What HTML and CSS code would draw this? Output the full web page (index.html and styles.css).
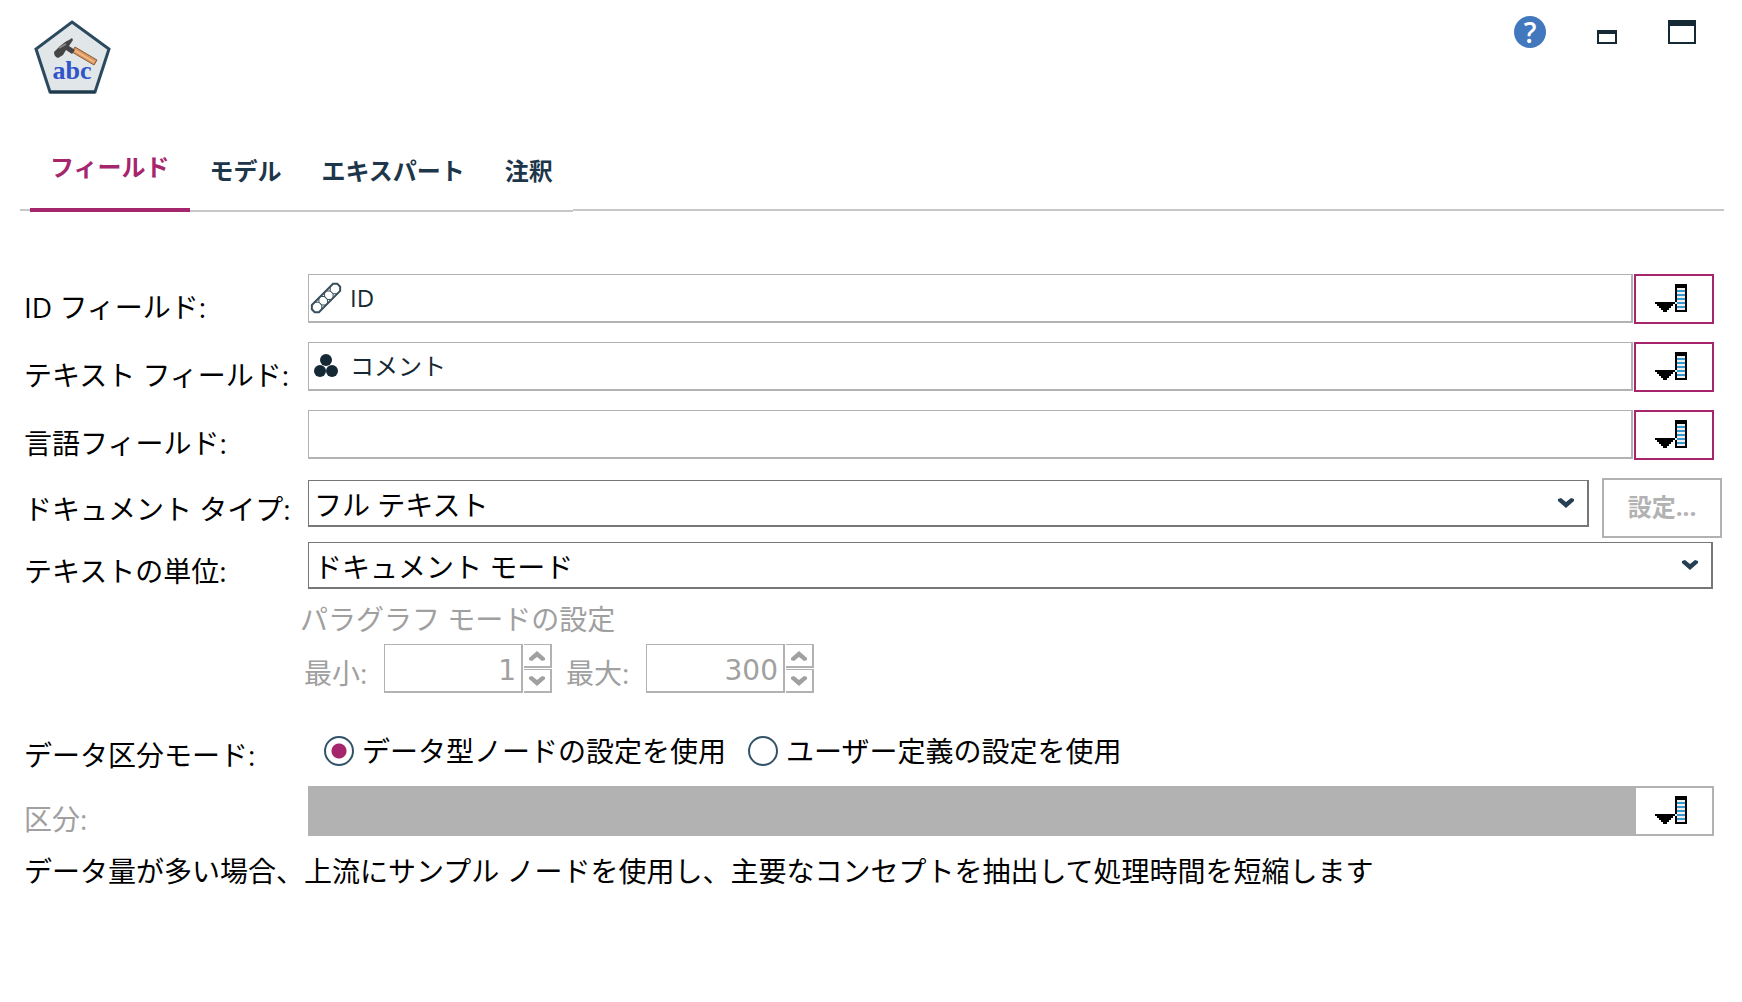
FILE: index.html
```html
<!DOCTYPE html>
<html lang="ja">
<head>
    <meta charset="UTF-8">
    <meta name="viewport" content="width=device-width, initial-scale=1.0">
    <title>フィールド</title>
    <link rel="stylesheet" href="styles.css">
</head>
<body>

<!-- shared icons -->
<svg class="sprite" aria-hidden="true">
    <symbol id="pick" viewBox="0 0 36 30">
        <g shape-rendering="crispEdges">
            <path d="M0 18h20v2h-2v2h-2v2h-2v2h-2v2h-4v-2h-2v-2h-2v-2h-2v-2h-2z"/>
            <path d="M20 0h12v28h-12z"/>
            <path fill="#f0f0f0" d="M22 4h8v22h-8zM20 18h2v2h-2z"/>
            <path fill="#3399cc" d="M22 6h8v2h-8zM22 10h8v2h-8zM22 14h8v2h-8zM22 18h8v2h-8zM22 22h8v2h-8z"/>
        </g>
    </symbol>
    <symbol id="down" viewBox="0 0 16 10">
        <path d="M0 1l3-1 5 4 5-4 3 1v2l-8 7-8-7z"/>
    </symbol>
    <symbol id="up" viewBox="0 0 16 10">
        <path d="M0 9l3 1 5-4 5 4 3-1v-2l-8-7-8 7z"/>
    </symbol>
</svg>

<header class="header">
    <svg class="logo" viewBox="0 0 80 80" role="img" aria-label="abc">
        <path d="M40 4L77 31 63 74H18L4 31z" fill="#e1e6e9" stroke="#2b4a5f" stroke-width="3"/>
        <path d="M18 74H63" stroke="#1f3a4d" stroke-width="3"/>
        <path d="M40 34l3-5 22 13-3 5z" fill="#d9975f" stroke="#8a5a35"/>
        <path d="M42 32l20 12" stroke="#f0b987" stroke-width="2"/>
        <path d="M22 34l6-6c4-3 6-5 9-6l3-2 1 2-4 6 6 4-3 4-6-4-3 5-5 3c-3-1-4-3-4-6z" fill="#454545"/>
        <path d="M27 30l7-4" stroke="#888" stroke-width="2"/>
        <text class="logo-text" x="40" y="61" text-anchor="middle">abc</text>
    </svg>
    <div class="window-buttons">
        <button type="button" class="help" aria-label="ヘルプ">?</button>
        <button type="button" class="window-button" aria-label="最小化">
            <svg width="20" height="14" viewBox="0 0 20 14"><path fill="#152935" fill-rule="evenodd" d="M0 0h20v14H0zM2 4v8h16V4z"/></svg>
        </button>
        <button type="button" class="window-button" aria-label="最大化">
            <svg width="28" height="24" viewBox="0 0 28 24"><path fill="#152935" fill-rule="evenodd" d="M0 0h28v24H0zM2 6v16h24V6z"/></svg>
        </button>
    </div>
</header>

<nav class="tabs" role="tablist">
    <button type="button" class="tab active" role="tab" aria-selected="true">フィールド</button>
    <button type="button" class="tab" role="tab">モデル</button>
    <button type="button" class="tab" role="tab">エキスパート</button>
    <button type="button" class="tab" role="tab">注釈</button>
</nav>

<form class="form">
    <div class="row">
        <label for="idField">ID フィールド:</label>
        <div class="picker">
            <div class="field">
                <svg class="field-icon" viewBox="0 0 32 32" fill="none" stroke="#3a4f5c">
                    <g transform="rotate(-45 16 16)">
                        <path d="M1 11h30l3 3v4l-3 3H1l-3-3v-4z" stroke-width="2"/>
                        <path d="M5 11l3 3v4l-3 3M11 11l-3 3M8 18l3 3M13 11l3 3v4l-3 3M19 11l-3 3M16 18l3 3M21 11l3 3v4l-3 3M27 11l-3 3M24 18l3 3" stroke-width="1"/>
                    </g>
                </svg>
                <input type="text" id="idField" value="ID" readonly>
            </div>
            <button type="button" class="pick" aria-label="フィールドを選択"><svg><use href="#pick"/></svg></button>
        </div>
    </div>

    <div class="row">
        <label for="textField">テキスト フィールド:</label>
        <div class="picker">
            <div class="field">
                <svg class="field-icon" viewBox="0 0 32 32" fill="#152935">
                    <circle cx="16" cy="10" r="6"/>
                    <circle cx="10" cy="21" r="6"/>
                    <circle cx="22" cy="21" r="6"/>
                </svg>
                <input type="text" id="textField" value="コメント" readonly>
            </div>
            <button type="button" class="pick" aria-label="フィールドを選択"><svg><use href="#pick"/></svg></button>
        </div>
    </div>

    <div class="row">
        <label for="languageField">言語フィールド:</label>
        <div class="picker">
            <div class="field">
                <input type="text" id="languageField" readonly>
            </div>
            <button type="button" class="pick" aria-label="フィールドを選択"><svg><use href="#pick"/></svg></button>
        </div>
    </div>

    <div class="row row-type">
        <label for="documentType">ドキュメント タイプ:</label>
        <div class="type">
            <div class="select">
                <select id="documentType">
                    <option>フル テキスト</option>
                </select>
                <svg class="arrow"><use href="#down"/></svg>
            </div>
            <button type="button" class="settings" disabled>設定...</button>
        </div>
    </div>

    <div class="row row-unit">
        <label for="textUnit">テキストの単位:</label>
        <div class="select">
            <select id="textUnit">
                <option>ドキュメント モード</option>
            </select>
            <svg class="arrow"><use href="#down"/></svg>
        </div>
    </div>

    <fieldset class="paragraph" disabled>
        <legend>パラグラフ モードの設定</legend>
        <div class="limits">
            <label for="minimum">最小:</label>
            <div class="spinner">
                <input type="number" id="minimum" value="1">
                <div class="steps">
                    <button type="button" aria-label="増やす"><svg><use href="#up"/></svg></button>
                    <button type="button" aria-label="減らす"><svg><use href="#down"/></svg></button>
                </div>
            </div>
            <label for="maximum">最大:</label>
            <div class="spinner">
                <input type="number" id="maximum" value="300">
                <div class="steps">
                    <button type="button" aria-label="増やす"><svg><use href="#up"/></svg></button>
                    <button type="button" aria-label="減らす"><svg><use href="#down"/></svg></button>
                </div>
            </div>
        </div>
    </fieldset>

    <div class="row row-mode" role="radiogroup" aria-labelledby="modeLabel">
        <span class="label" id="modeLabel">データ区分モード:</span>
        <div class="radios">
            <label class="radio"><input type="radio" name="mode" checked>データ型ノードの設定を使用</label>
            <label class="radio"><input type="radio" name="mode">ユーザー定義の設定を使用</label>
        </div>
    </div>

    <div class="row row-disabled">
        <label for="partition">区分:</label>
        <div class="picker">
            <div class="field">
                <input type="text" id="partition" disabled>
            </div>
            <button type="button" class="pick" aria-label="フィールドを選択" disabled><svg><use href="#pick"/></svg></button>
        </div>
    </div>

    <p class="note">データ量が多い場合、上流にサンプル ノードを使用し、主要なコンセプトを抽出して処理時間を短縮します</p>
</form>

</body>
</html>
```
FILE: styles.css
```css
* {
    box-sizing: border-box;
}

body {
    margin: 0;
    background-color: #fff;
    color: #000;
    font-family: "Open Sans", "Noto Sans CJK JP", sans-serif;
    font-size: 28px;
    line-height: 34px;
}

button,
input,
select {
    margin: 0;
    padding: 0;
    border: none;
    border-radius: 0;
    background: none;
    color: inherit;
    font: inherit;
}

.sprite {
    position: absolute;
    width: 0;
    height: 0;
}

/* header */

.header {
    display: flex;
    justify-content: space-between;
    padding: 18px 46px 0 32px;
    height: 150px;
}

.logo {
    width: 80px;
    height: 80px;
}

.logo-text {
    fill: #2f55c8;
    font: bold 26px "Liberation Serif", serif;
}

.window-buttons {
    display: flex;
    align-items: flex-end;
    gap: 51px;
    height: 26px;
}

.window-button svg {
    display: block;
}

.help {
    width: 32px;
    height: 32px;
    margin-bottom: -4px;
    border-radius: 50%;
    background-color: #4178be;
    color: #fff;
    font-family: "Open Sans", sans-serif;
    font-size: 28px;
    font-weight: 600;
    line-height: 32px;
}

/* tabs */

.tabs {
    display: flex;
    padding: 0 18px 0 20px;
}

.tabs::before,
.tabs::after {
    content: "";
    width: 10px;
    margin-bottom: 1px;
    border-bottom: 2px solid #c8c8c8;
}

.tabs::after {
    flex: 1;
}

.tab {
    padding: 4px 20px 22px;
    border-bottom: 2px solid #c8c8c8;
    color: #1d3649;
    font-size: 24px;
    font-weight: bold;
    line-height: 34px;
}

.tab.active {
    padding: 0 20px 24px;
    border-bottom: 4px solid #a6266e;
    color: #a6266e;
}

/* form */

.form {
    padding: 62px 20px 0 24px;
}

.row {
    display: grid;
    grid-template-columns: 284px 1fr;
    margin: 0 8px 18px 0;
}

.row > label,
.row > .label {
    padding-top: 16px;
    white-space: nowrap;
}

.picker {
    display: flex;
    align-items: flex-start;
    gap: 1px;
}

.field {
    display: flex;
    flex: 1;
    align-items: center;
    gap: 8px;
    height: 49px;
    padding-left: 1px;
    border: 1px solid #b2b2b2;
    border-width: 1px 2px 2px 1px;
}

.field input {
    flex: 1;
    color: #152935;
    font-size: 24px;
}

.field-icon {
    width: 32px;
    height: 32px;
}

.pick {
    width: 80px;
    height: 50px;
    padding-right: 2px;
    border: 2px solid #a6266e;
    background-color: #fff;
}

.pick svg {
    display: block;
    width: 36px;
    height: 30px;
    margin: 0 auto;
}

.select {
    position: relative;
    flex: 1;
}

.select select {
    display: block;
    width: 100%;
    height: 47px;
    padding: 3px 0 0 5px;
    border: 1px solid #777;
    border-width: 1px 2px 2px 1px;
    appearance: none;
}

.arrow {
    position: absolute;
    top: 18px;
    right: 15px;
    width: 16px;
    height: 10px;
    fill: #263f52;
    pointer-events: none;
}

.row-type {
    margin: 0 0 4px;
}

.row-type > label {
    padding-top: 14px;
}

.row-unit {
    margin-right: 9px;
}

.row-unit > label {
    padding-top: 12px;
}

.type {
    display: flex;
    align-items: flex-start;
    gap: 13px;
}

.type .select {
    margin-top: 2px;
}

.settings {
    width: 120px;
    height: 60px;
    padding-bottom: 2px;
    border: 2px solid #b2b2b2;
    color: #b2b2b2;
    font-size: 24px;
    font-weight: bold;
}

.paragraph {
    margin: -5px 0 0 276px;
    padding: 0;
    border: none;
    color: #a0a0a0;
}

.paragraph legend {
    padding: 0;
}

.limits {
    display: flex;
    padding: 8px 0 0 4px;
}

.limits label {
    width: 80px;
    padding-top: 12px;
}

.spinner {
    display: flex;
    gap: 1px;
    margin-right: 14px;
}

.spinner input {
    width: 139px;
    height: 49px;
    padding: 4px 5px 0 0;
    border: 1px solid #b2b2b2;
    border-width: 1px 2px 2px 1px;
    font-family: "DejaVu Sans", sans-serif;
    text-align: right;
    appearance: textfield;
}

.spinner input::-webkit-inner-spin-button {
    appearance: none;
    margin: 0;
}

.steps {
    display: flex;
    flex-direction: column;
    gap: 1px;
    width: 28px;
}

.steps button {
    display: flex;
    align-items: center;
    justify-content: center;
    height: 24px;
    border: solid #b2b2b2;
    border-width: 1px 2px 2px 0;
}

.steps svg {
    width: 16px;
    height: 10px;
    fill: #a0a0a0;
}

.row-mode {
    margin-top: 41px;
    margin-bottom: 14px;
}

.row-mode > .label {
    padding-top: 4px;
}

.radios {
    display: flex;
    align-items: flex-start;
    gap: 22px;
    padding-left: 16px;
}

.radio {
    display: flex;
    align-items: center;
    gap: 8px;
}

.radio input {
    width: 30px;
    height: 30px;
    border: 2px solid #325269;
    border-radius: 50%;
    appearance: none;
}

.radio input:checked {
    background: radial-gradient(circle, #a6266e 7px, #fff 8px);
}

.row-disabled > label {
    color: #a0a0a0;
}

.row-disabled .picker {
    gap: 0;
}

.row-disabled .field {
    height: 50px;
    background-color: #b2b2b2;
}

.row-disabled .pick {
    border-color: #b2b2b2;
}

.note {
    margin: 0;
}
```
